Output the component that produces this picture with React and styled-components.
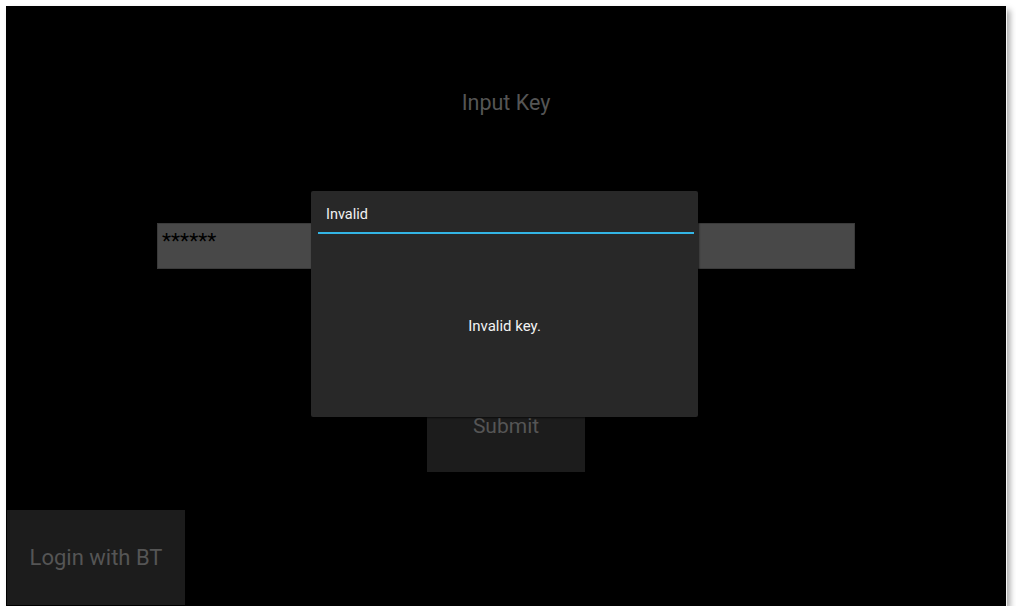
import React from 'react';
import styled, { createGlobalStyle } from 'styled-components';

const GlobalStyle = createGlobalStyle`
  html, body {
    margin: 0;
    padding: 0;
    background: #ffffff;
  }
  body {
    font-family: Roboto, "Noto Sans", "Liberation Sans", sans-serif;
  }
`;

const Frame = styled.div`
  padding: 6px 0 0 6px;
`;

const Screen = styled.div`
  position: relative;
  width: 1000px;
  height: 600px;
  background: #000;
  display: flex;
  flex-direction: column;
  align-items: center;
  box-sizing: border-box;
  box-shadow: 1px 1px 0 #f4f4f4, 4px 4px 6px rgba(0, 0, 0, 0.35);
  overflow: hidden;
`;

const Title = styled.div`
  margin-top: 85px;
  height: 24px;
  line-height: 24px;
  font-size: 21.5px;
  color: #555;
`;

const KeyInput = styled.div`
  margin-top: 108px;
  width: 698px;
  height: 46px;
  box-sizing: border-box;
  background: #484848;
  border: 1px solid #3a3a3a;
  padding: 5px 4px;
  font-size: 21px;
  line-height: 24px;
  color: #000;
`;

const SubmitButton = styled.div`
  margin-top: 111px;
  width: 158px;
  height: 92px;
  background: #1c1c1c;
  color: #555;
  font-size: 21px;
  display: flex;
  align-items: center;
  justify-content: center;
`;

const BtButton = styled.div`
  margin-top: auto;
  align-self: flex-start;
  margin-left: 1px;
  margin-bottom: 1px;
  width: 178px;
  height: 95px;
  background: #1c1c1c;
  color: #555;
  font-size: 22px;
  display: flex;
  align-items: center;
  justify-content: center;
`;

const Dialog = styled.div`
  position: absolute;
  left: 305px;
  top: 185px;
  width: 387px;
  height: 226px;
  background: #282828;
  border-radius: 2px;
  box-shadow: 1px 1px 2px rgba(0, 0, 0, 0.6);
  display: flex;
  flex-direction: column;
`;

const DialogTitle = styled.div`
  height: 43px;
  margin: 0 4px 0 7px;
  padding: 6px 0 0 8px;
  box-sizing: border-box;
  display: flex;
  align-items: center;
  font-size: 14.5px;
  color: #f2f2f2;
  border-bottom: 2px solid #33b5e5;
`;

const DialogBody = styled.div`
  flex: 1;
  display: flex;
  align-items: center;
  justify-content: center;
  font-size: 15px;
  color: #f2f2f2;
`;

export default function App() {
  return (
    <>
      <GlobalStyle />
      <Frame>
        <Screen>
          <Title>Input Key</Title>
          <KeyInput>******</KeyInput>
          <SubmitButton>Submit</SubmitButton>
          <BtButton>Login with BT</BtButton>
          <Dialog>
            <DialogTitle>Invalid</DialogTitle>
            <DialogBody>Invalid key.</DialogBody>
          </Dialog>
        </Screen>
      </Frame>
    </>
  );
}
